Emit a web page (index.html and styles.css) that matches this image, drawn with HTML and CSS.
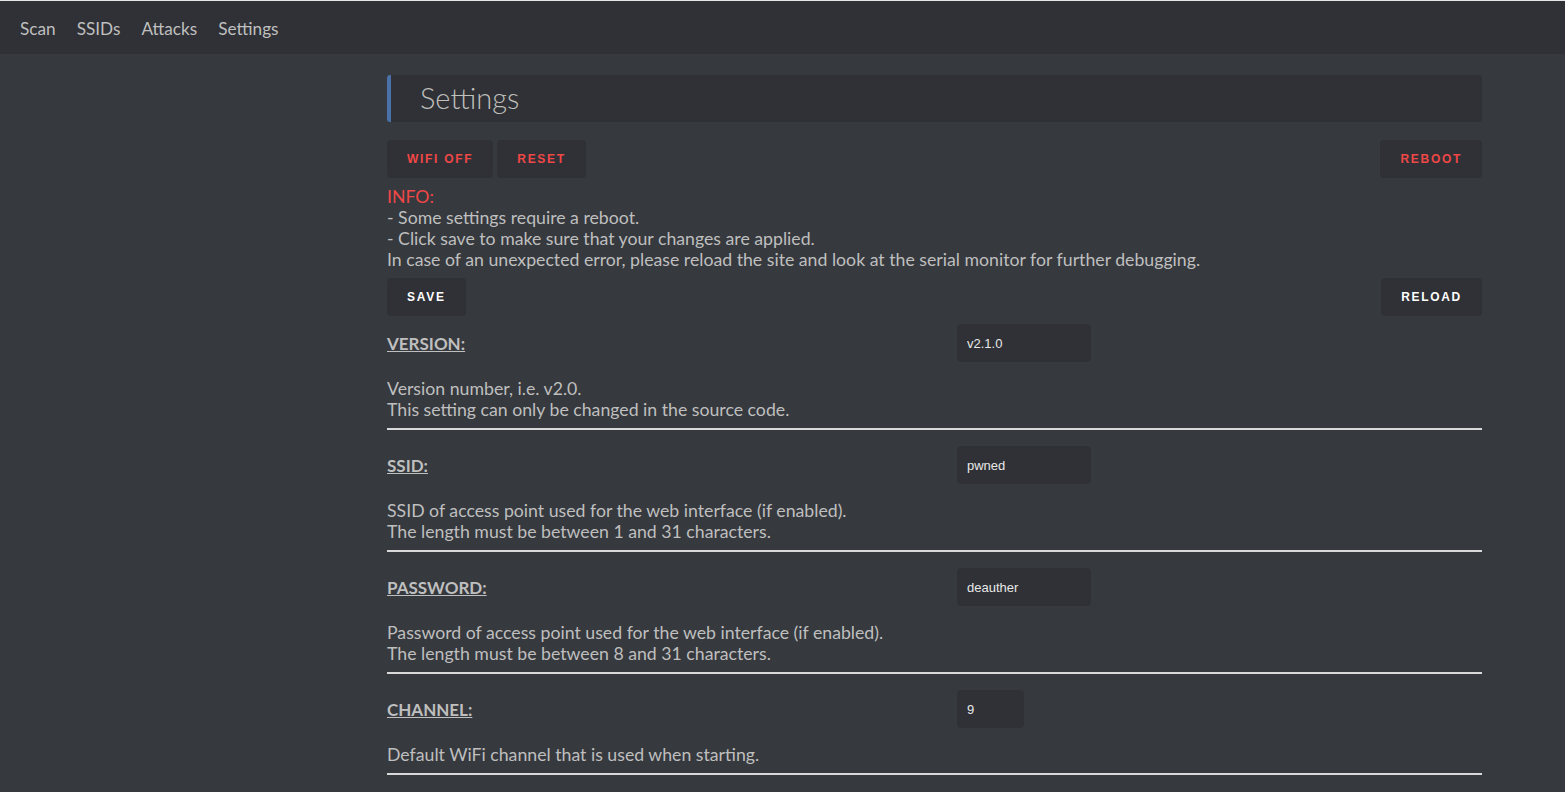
FILE: index.html
```
<!DOCTYPE html>
<html>
<head>
<meta charset="utf-8">
<title>Settings</title>
<link rel="stylesheet" href="styles.css">
</head>
<body>
<nav class="nav">
  <a class="nav-item">Scan</a>
  <a class="nav-item">SSIDs</a>
  <a class="nav-item">Attacks</a>
  <a class="nav-item">Settings</a>
</nav>
<main class="container">
  <h1 class="title">Settings</h1>
  <div class="btn-row top-row">
    <div class="btn-group">
      <button class="btn red">WIFI OFF</button>
      <button class="btn red">RESET</button>
    </div>
    <button class="btn red">REBOOT</button>
  </div>
  <p class="info">
    <span class="red-text">INFO:</span><br>
    - Some settings require a reboot.<br>
    - Click save to make sure that your changes are applied.<br>
    In case of an unexpected error, please reload the site and look at the serial monitor for further debugging.
  </p>
  <div class="btn-row save-row">
    <button class="btn">SAVE</button>
    <button class="btn">RELOAD</button>
  </div>
  <section class="setting first">
    <div class="setting-row">
      <label class="setting-label">VERSION:</label>
      <input class="setting-input" type="text" value="v2.1.0">
    </div>
    <p class="setting-desc">Version number, i.e. v2.0.<br>This setting can only be changed in the source code.</p>
  </section>
  <section class="setting">
    <div class="setting-row">
      <label class="setting-label">SSID:</label>
      <input class="setting-input" type="text" value="pwned">
    </div>
    <p class="setting-desc">SSID of access point used for the web interface (if enabled).<br>The length must be between 1 and 31 characters.</p>
  </section>
  <section class="setting">
    <div class="setting-row">
      <label class="setting-label">PASSWORD:</label>
      <input class="setting-input" type="text" value="deauther">
    </div>
    <p class="setting-desc">Password of access point used for the web interface (if enabled).<br>The length must be between 8 and 31 characters.</p>
  </section>
  <section class="setting">
    <div class="setting-row">
      <label class="setting-label">CHANNEL:</label>
      <input class="setting-input small" type="text" value="9">
    </div>
    <p class="setting-desc">Default WiFi channel that is used when starting.</p>
  </section>
</main>
</body>
</html>
```
FILE: styles.css
```
html, body {
  margin: 0;
  padding: 0;
}
body {
  background: #36393e;
  color: #bfbfbf;
  font-family: "Lato", "Noto Sans", sans-serif;
  font-size: 17.7px;
  line-height: 21px;
  border-top: 1px solid #e6e6e6;
  overflow: hidden;
  height: 791px;
}
.nav {
  background: #2f3136;
  height: 53px;
  display: flex;
  align-items: center;
  padding-left: 20px;
  gap: 21px;
}
.nav-item {
  color: #bfbfbf;
  font-size: 17.2px;
  padding-top: 2px;
}
.container {
  margin-left: 387px;
  width: 1095px;
  padding-top: 21px;
}
.title {
  margin: 0;
  height: 47px;
  box-sizing: border-box;
  background: #2f3136;
  border-left: 4px solid #4a72a8;
  border-radius: 3px;
  padding-left: 29px;
  padding-bottom: 3px;
  display: flex;
  align-items: center;
  font-size: 29px;
  font-weight: 300;
  color: #bfbfbb;
}
.btn-row {
  display: flex;
  justify-content: space-between;
}
.top-row {
  margin-top: 18px;
}
.btn-group {
  display: flex;
  gap: 4px;
}
.btn {
  height: 38px;
  padding: 0 20px;
  background: #2f3136;
  border: none;
  border-radius: 4px;
  color: #ffffff;
  font-family: "Liberation Sans", Arial, sans-serif;
  font-size: 12px;
  font-weight: 700;
  letter-spacing: 1.7px;
  text-transform: uppercase;
}
.btn.red {
  color: #f04747;
}
.red-text {
  color: #f04747;
}
.info {
  margin: 8px 0 0 0;
}
.save-row {
  margin-top: 8px;
}
.setting {
  border-bottom: 2px solid #d9d9d9;
  padding-bottom: 8px;
  margin-bottom: 16px;
}
.setting.first {
  margin-top: 8px;
}
.setting-row {
  display: grid;
  grid-template-columns: 570px 1fr;
  align-items: center;
  height: 38px;
}
.setting-label {
  font-size: 17px;
  font-weight: 700;
  text-decoration: underline;
  color: #bfbfbf;
}
.setting-input {
  width: 134px;
  height: 38px;
  box-sizing: border-box;
  padding: 0 10px;
  background: #2f3136;
  border: none;
  border-radius: 4px;
  color: #e8e8e8;
  font-family: "Liberation Sans", Arial, sans-serif;
  font-size: 13px;
  outline: none;
}
.setting-input.small {
  width: 67px;
}
.setting-desc {
  margin: 16px 0 0 0;
}
```
